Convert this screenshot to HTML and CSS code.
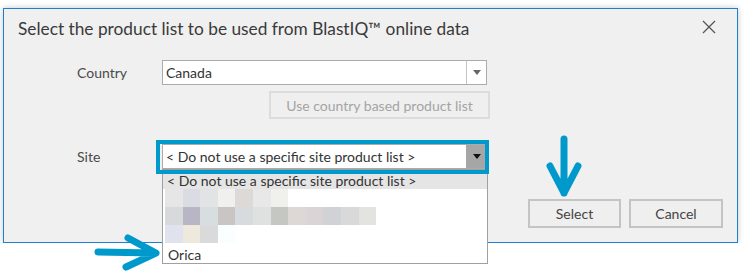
FILE: index.html
```html
<!DOCTYPE html>
<html lang="en">
<head>
    <meta charset="UTF-8">
    <title>Select product list</title>
    <link rel="stylesheet" href="styles.css">
</head>
<body>
    <div class="dialog">
        <div class="titlebar">
            <span class="title">Select the product list to be used from BlastIQ™ online data</span>
            <svg class="close" width="14" height="14" viewBox="0 0 14 14">
                <path d="M1 1 L13 13 M13 1 L1 13" stroke="#555" stroke-width="1.3" fill="none"/>
            </svg>
        </div>

        <div class="row row-country">
            <label class="label">Country</label>
            <div class="combo">
                <span class="combo-text">Canada</span>
                <span class="combo-btn">
                    <svg width="8" height="5" viewBox="0 0 8 5"><path d="M0 0 L8 0 L4 5 Z" fill="#666"/></svg>
                </span>
            </div>
        </div>

        <div class="row-use">
            <button class="btn btn-disabled">Use country based product list</button>
        </div>

        <div class="row row-site">
            <label class="label">Site</label>
            <div class="combo combo-open">
                <span class="combo-text">&lt; Do not use a specific site product list &gt;</span>
                <span class="combo-btn">
                    <svg width="8" height="5" viewBox="0 0 8 5"><path d="M0 0 L8 0 L4 5 Z" fill="#111"/></svg>
                </span>
            </div>
        </div>

        <div class="actions">
            <button class="btn btn-action">Select</button>
            <button class="btn btn-action btn-cancel">Cancel</button>
        </div>
    </div>

    <!-- open drop-down of the Site combo (popup layer) -->
    <ul class="dropdown">
        <li class="item item-active">&lt; Do not use a specific site product list &gt;</li>
        <li class="pixels" id="row1"></li>
        <li class="pixels" id="row2"></li>
        <li class="pixels" id="row3"></li>
        <li class="item item-orica">Orica</li>
    </ul>
    <div class="highlight"></div>

    <!-- callout arrows -->
    <svg class="callouts" width="747" height="272" viewBox="0 0 747 272">
        <g stroke="#0099cc" stroke-width="7" stroke-linecap="round" stroke-linejoin="round" fill="none">
            <path d="M564 139 L564 193 M550 166 L564 193 L578 166"/>
            <path d="M98 252 L154 253 M128 238 L156 253 L126 267"/>
        </g>
    </svg>

    <script>
    // blurred entries in the list (pixelated in the original)
    const rows = {
      row1: ['#e6e6e6', '#dadce3', '#e2e3e5', '#f0f0ee', '#dcd9d7', '#e8e8e8', '#f0f0ed'],
      row2: ['#d8d9db', '#b8b5c4', '#d8dde0', '#c9c5c4', '#d8dbdd', '#dfe0e0', '#c5c7c2', '#ddd8d6', '#dad4d6', '#d1d2d6', '#d9d9d9', '#e3e3e1'],
      row3: ['#e0e2ee', '#efe8dc', '#dadada', '#f8fffe']
    };

    Object.keys(rows).forEach(id => {
      const li = document.getElementById(id);
      rows[id].forEach(c => {
        const s = document.createElement('span');
        s.className = 'px';
        s.style.background = c;
        li.appendChild(s);
      });
    });
    </script>
</body>
</html>
```

FILE: styles.css
```css
body {
    margin: 0;
    background: #ffffff;
    font-family: "Lato", "Noto Sans", sans-serif;
    font-size: 14px;
    color: #444;
}

.dialog {
    position: relative;
    box-sizing: border-box;
    width: 735px;
    height: 235px;
    margin: 8px 0 0 3px;
    background: #f0f0f0;
    border: 1px solid #1e7fd0;
    box-shadow: 0 0 6px rgba(0, 0, 0, 0.22);
}

.titlebar {
    display: flex;
    align-items: center;
    justify-content: space-between;
    height: 24px;
    padding: 7px 21px 0 14px;
}

.title {
    font-size: 17.3px;
    color: #3a3a3a;
}

.close {
    margin-top: -3px;
}

.row {
    display: flex;
    align-items: center;
    height: 25px;
    padding-left: 73px;
}

.row-country {
    margin-top: 20px;
}

.row-site {
    margin-top: 25px;
}

.label {
    width: 85px;
    color: #4a4a4a;
}

.combo {
    box-sizing: border-box;
    display: flex;
    width: 325px;
    height: 25px;
    background: #fff;
    border: 1px solid #ababab;
}

.combo-text {
    flex: 1;
    padding-left: 3px;
    line-height: 23px;
    color: #333;
}

.combo-btn {
    display: flex;
    align-items: center;
    justify-content: center;
    width: 19px;
    border-left: 1px solid #c4c4c4;
}

.combo-open .combo-btn {
    background: #a6a6a6;
    border-left-color: #a6a6a6;
}

.highlight {
    position: absolute;
    left: 156px;
    top: 140px;
    width: 333px;
    height: 34px;
    box-sizing: border-box;
    border: 4px solid #0099cc;
}

.dropdown {
    position: absolute;
    left: 162px;
    top: 169px;
    box-sizing: border-box;
    width: 326px;
    height: 95px;
    margin: 0;
    padding: 3px 0 0;
    list-style: none;
    background: #fff;
    border: 1px solid #a0a0a0;
}

.item {
    height: 16px;
    line-height: 16px;
    padding-left: 4px;
    color: #333;
}

.item-active {
    background: #e5e5e5;
}

.item-orica {
    margin-top: 3px;
    height: 17px;
    line-height: 17px;
    padding-left: 5px;
}

.pixels {
    display: flex;
    height: 18px;
    padding-left: 2px;
}

.px {
    width: 17.6px;
    height: 100%;
}

.row-use {
    margin-top: 6px;
    padding-left: 265px;
}

.btn {
    box-sizing: border-box;
    font-family: inherit;
    font-size: 14px;
    background: #efefef;
    border: 2px solid #c4c4c4;
    color: #444;
    padding: 0;
}

.btn-disabled {
    width: 221px;
    height: 28px;
    color: #a4a4a4;
    border-color: #dcdcdc;
}

.actions {
    display: flex;
    justify-content: flex-end;
    gap: 8px;
    margin-top: 30px;
    padding-right: 14px;
}

.btn-action {
    width: 93px;
    height: 29px;
}

.btn-cancel {
    width: 94px;
}

.callouts {
    position: absolute;
    left: 0;
    top: 0;
    pointer-events: none;
}
```
